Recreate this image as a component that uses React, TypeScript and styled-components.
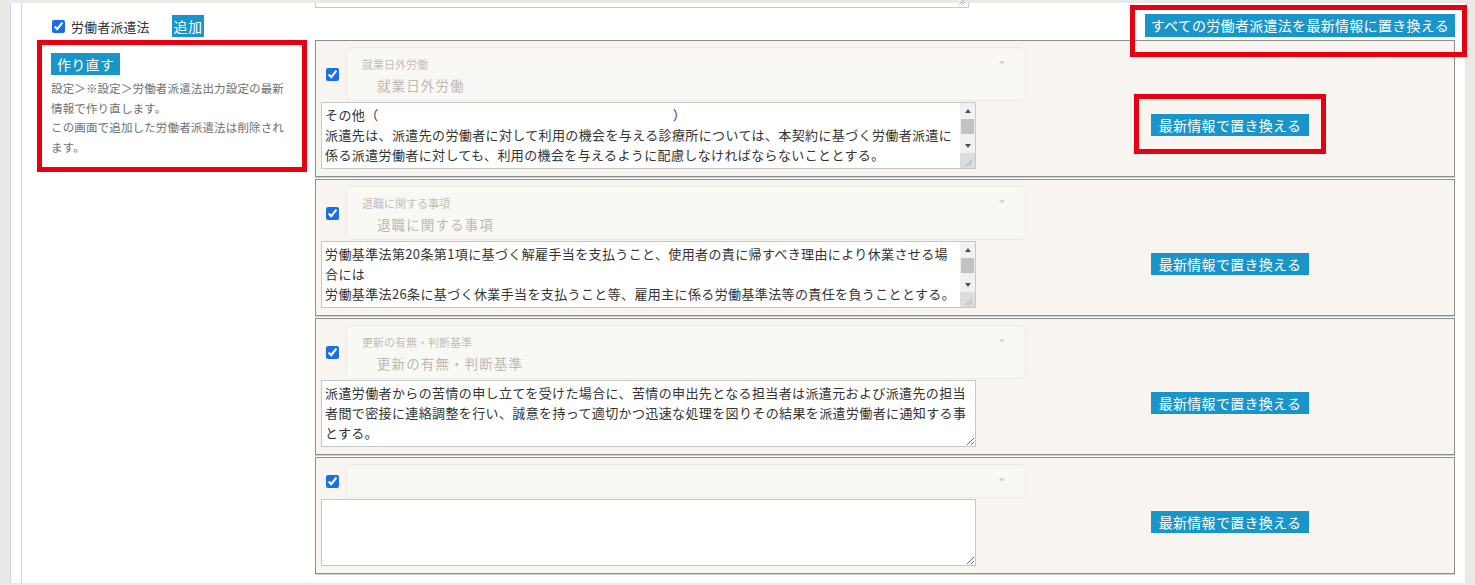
import React from "react";
import styled, { createGlobalStyle } from "styled-components";

const GlobalStyle = createGlobalStyle`
  html, body {
    margin: 0;
    padding: 0;
    background: #ebe9e6;
  }
  body {
    font-family: "Noto Sans CJK JP", "Noto Sans", sans-serif;
    color: #333;
  }
  * { box-sizing: border-box; }
`;

const Frame = styled.div`
  height: 585px;
  padding: 3px 10px 2px 10px;
  display: flex;
  overflow: hidden;
`;

const OuterPanel = styled.div`
  flex: 1;
  display: flex;
  background: #fff;
  border-left: 1px solid #c3d6ee;
  padding-left: 10px;
`;

const InnerPanel = styled.div`
  flex: 1;
  border-left: 1px solid #c3d6ee;
  padding-left: 15px;
`;

const Layout = styled.div`
  display: grid;
  grid-template-columns: 270px 1140px;
  grid-template-rows: 5px 32px auto;
  column-gap: 8px;
`;

const StubArea = styled.div`
  grid-column: 2;
  width: 654px;
  height: 5px;
  border: 1px solid #c9c9c9;
  border-top: none;
  position: relative;
  background: #fff;
`;

const Grip = styled.svg`
  position: absolute;
  right: 2px;
  bottom: 1px;
`;

const HeaderLeft = styled.div`
  display: flex;
  align-items: center;
  padding: 4px 0 0 15px;
`;

const HeaderRight = styled.div`
  display: flex;
  justify-content: flex-end;
  align-items: center;
  padding-top: 3px;
`;

const Check = styled.input.attrs({ type: "checkbox" })`
  width: 13px;
  height: 13px;
  margin: 0;
  accent-color: #1a6fe6;
  flex: none;
`;

const HeaderLabel = styled.span`
  font-size: 13px;
  color: #333;
  margin-left: 6px;
  margin-right: 22px;
  letter-spacing: 0.1px;
`;

const Button = styled.button<{ $pad: number; $h?: number }>`
  background: #1995c9;
  color: #fff;
  border: none;
  border-radius: 0;
  font-family: "Noto Sans CJK JP", "Noto Sans", sans-serif;
  font-size: 14px;
  letter-spacing: 0.3px;
  height: ${(p) => p.$h ?? 22}px;
  line-height: ${(p) => p.$h ?? 22}px;
  padding: 0 ${(p) => p.$pad}px;
  cursor: pointer;
  white-space: nowrap;
`;

const Annotated = styled.span`
  position: relative;
  display: inline-flex;
`;

const Mark = styled.span<{ $t: number; $r: number; $b: number; $l: number }>`
  position: absolute;
  top: ${(p) => -p.$t}px;
  right: ${(p) => -p.$r}px;
  bottom: ${(p) => -p.$b}px;
  left: ${(p) => -p.$l}px;
  border: 5px solid #e60012;
  pointer-events: none;
`;

const RebuildPanel = styled.div`
  align-self: start;
  height: 132px;
  border: 5px solid #e60012;
  padding: 6px 9px 0 9px;
`;

const Note = styled.p`
  margin: 4px 0 0 0;
  font-size: 11.5px;
  line-height: 19.5px;
  color: #6e6e6e;
  letter-spacing: 0.15px;
`;

const CardStack = styled.div`
  display: flex;
  flex-direction: column;
  gap: 2px;
`;

const Card = styled.div`
  display: grid;
  grid-template-columns: 705px 1fr;
  row-gap: 1px;
  padding: 6px 0 7px 5px;
  background: #f8f5f0;
  border: 1px solid #8f8f8f;
  box-shadow: 0 1px 0 #cfcfcf;
`;

const CardHead = styled.div`
  display: flex;
  align-items: center;
  gap: 7px;
  padding-left: 5px;
`;

const SelectBox = styled.div<{ $tall: boolean }>`
  position: relative;
  width: 680px;
  height: ${(p) => (p.$tall ? 54 : 34)}px;
  background: #faf8f5;
  border: 1px solid #eeeae4;
  border-radius: 6px;
  padding: 9px 0 0 15px;

  &::after {
    content: "";
    position: absolute;
    right: 20px;
    top: 13px;
    border-left: 3.5px solid transparent;
    border-right: 3.5px solid transparent;
    border-top: 4px solid #d9d5d0;
  }
`;

const SelectLabel = styled.div`
  font-size: 11px;
  line-height: 14px;
  color: #c2beb9;
`;

const SelectValue = styled.div`
  font-size: 13.5px;
  line-height: 20px;
  margin-top: 4px;
  padding-left: 15px;
  color: #bdb8b2;
  letter-spacing: 1.1px;
`;

const AreaWrap = styled.div`
  grid-column: 1;
  position: relative;
  width: 655px;
  height: 67px;
`;

const Area = styled.textarea<{ $scroll: boolean }>`
  display: block;
  width: 100%;
  height: 100%;
  margin: 0;
  padding: ${(p) => (p.$scroll ? "2px 18px 2px 3px" : "2px 3px")};
  border: 1px solid #c8c8c8;
  background: #fff;
  font-family: "Noto Sans CJK JP", "Noto Sans", sans-serif;
  font-size: 13px;
  letter-spacing: 0.375px;
  line-height: 20px;
  color: #333;
  resize: ${(p) => (p.$scroll ? "none" : "vertical")};
  overflow: hidden;
  outline: none;
`;

const FakeScroll = styled.div`
  position: absolute;
  top: 1px;
  right: 1px;
  bottom: 1px;
  width: 15px;
  display: flex;
  flex-direction: column;
  background: #f1f1f1;
`;

const ScrollBtn = styled.div<{ $dir: "up" | "down" }>`
  height: 15px;
  flex: none;
  display: flex;
  align-items: center;
  justify-content: center;

  &::before {
    content: "";
    border-left: 3.5px solid transparent;
    border-right: 3.5px solid transparent;
    ${(p) =>
      p.$dir === "up"
        ? "border-bottom: 4px solid #505050;"
        : "border-top: 4px solid #505050;"}
  }
`;

const Track = styled.div`
  flex: 1;
  padding: 1px 1px;
`;

const Thumb = styled.div`
  height: 15px;
  background: #c1c1c1;
`;

const Corner = styled.div`
  position: relative;
  height: 15px;
  flex: none;
  background: #dcdcdc;
`;

const ActionCell = styled.div`
  display: flex;
  justify-content: center;
  align-items: flex-start;
  padding: 12px 20px 0 0;
`;

type Item = { title: string; text: string; scroll: boolean };

const items: Item[] = [
  {
    title: "就業日外労働",
    text:
      "その他（　　　　　　　　　　　　　　　　　　　　　　）\n派遣先は、派遣先の労働者に対して利用の機会を与える診療所については、本契約に基づく労働者派遣に係る派遣労働者に対しても、利用の機会を与えるように配慮しなければならないこととする。\n",
    scroll: true,
  },
  {
    title: "退職に関する事項",
    text:
      "労働基準法第20条第1項に基づく解雇手当を支払うこと、使用者の責に帰すべき理由により休業させる場合には\n労働基準法26条に基づく休業手当を支払うこと等、雇用主に係る労働基準法等の責任を負うこととする。\n",
    scroll: true,
  },
  {
    title: "更新の有無・判断基準",
    text:
      "派遣労働者からの苦情の申し立てを受けた場合に、苦情の申出先となる担当者は派遣元および派遣先の担当者間で密接に連絡調整を行い、誠意を持って適切かつ迅速な処理を図りその結果を派遣労働者に通知する事とする。",
    scroll: false,
  },
  { title: "", text: "", scroll: false },
];

function ResizeGrip() {
  return (
    <Grip width="8" height="8" viewBox="0 0 8 8">
      <line x1="7" y1="1" x2="1" y2="7" stroke="#999" strokeWidth="0.8" />
      <line x1="7" y1="4" x2="4" y2="7" stroke="#999" strokeWidth="0.8" />
    </Grip>
  );
}

function TextBox({ text, scroll }: { text: string; scroll: boolean }) {
  return (
    <AreaWrap>
      <Area readOnly defaultValue={text} $scroll={scroll} />
      {scroll && (
        <FakeScroll>
          <ScrollBtn $dir="up" />
          <Track>
            <Thumb />
          </Track>
          <ScrollBtn $dir="down" />
          <Corner>
            <ResizeGrip />
          </Corner>
        </FakeScroll>
      )}
    </AreaWrap>
  );
}

export default function App() {
  return (
    <>
      <GlobalStyle />
      <Frame>
        <OuterPanel>
          <InnerPanel>
            <Layout>
              <StubArea>
                <ResizeGrip />
              </StubArea>

              <HeaderLeft>
                <Check defaultChecked />
                <HeaderLabel>労働者派遣法</HeaderLabel>
                <Button $pad={2}>追加</Button>
              </HeaderLeft>
              <HeaderRight>
                <Annotated>
                  <Button $pad={6} $h={23}>
                    すべての労働者派遣法を最新情報に置き換える
                  </Button>
                  <Mark $t={9} $r={12} $b={20} $l={15} />
                </Annotated>
              </HeaderRight>

              <RebuildPanel>
                <Button $pad={6}>作り直す</Button>
                <Note>
                  設定＞※設定＞労働者派遣法出力設定の最新
                  <br />
                  情報で作り直します。
                  <br />
                  この画面で追加した労働者派遣法は削除され
                  <br />
                  ます。
                </Note>
              </RebuildPanel>

              <CardStack>
                {items.map((it, i) => (
                  <Card key={i}>
                    <CardHead>
                      <Check defaultChecked />
                      <SelectBox $tall={it.title !== ""}>
                        {it.title && (
                          <>
                            <SelectLabel>{it.title}</SelectLabel>
                            <SelectValue>{it.title}</SelectValue>
                          </>
                        )}
                      </SelectBox>
                    </CardHead>
                    <span />
                    <TextBox text={it.text} scroll={it.scroll} />
                    <ActionCell>
                      {i === 0 ? (
                        <Annotated>
                          <Button $pad={8}>最新情報で置き換える</Button>
                          <Mark $t={20} $r={17} $b={18} $l={17} />
                        </Annotated>
                      ) : (
                        <Button $pad={8}>最新情報で置き換える</Button>
                      )}
                    </ActionCell>
                  </Card>
                ))}
              </CardStack>
            </Layout>
          </InnerPanel>
        </OuterPanel>
      </Frame>
    </>
  );
}
